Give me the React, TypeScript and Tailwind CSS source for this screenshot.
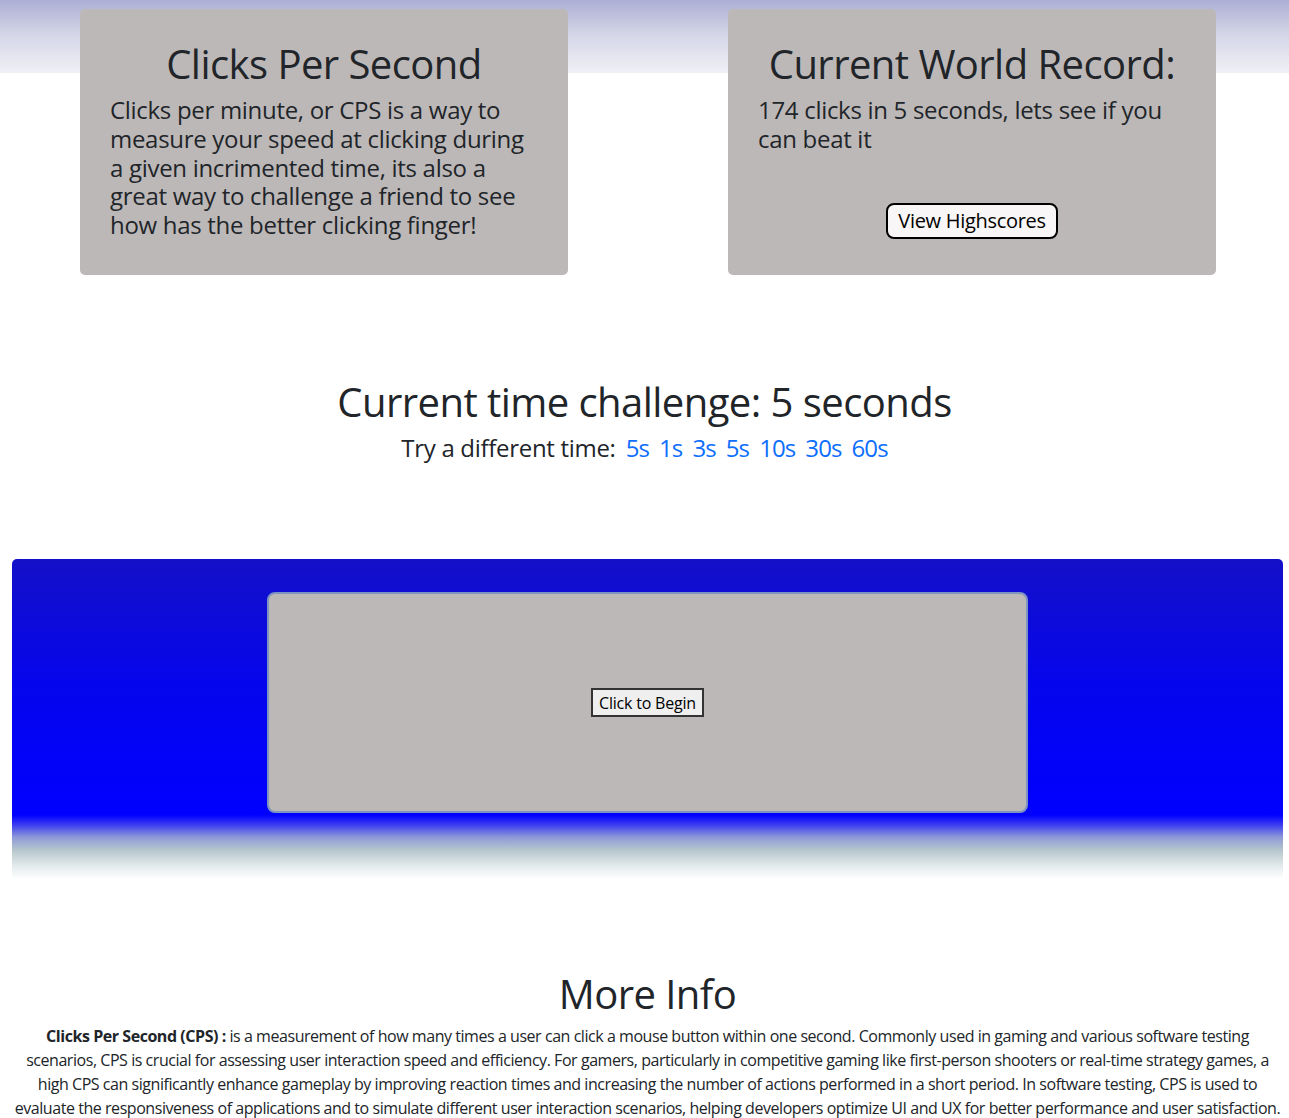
const times = ['5s', '1s', '3s', '5s', '10s', '30s', '60s'];

function InfoCard({ title, children }: { title: string; children: React.ReactNode }) {
  return (
    <div className="w-[488px] h-[266px] bg-[#bdb8b8] rounded-[5px] px-[30px] pt-[31px]">
      <h1 className="text-[40px] leading-[48px] font-medium tracking-[-0.55px] text-center mb-[8px] whitespace-nowrap">{title}</h1>
      {children}
    </div>
  );
}

export default function App() {
  return (
    <div className="w-[1289px] min-h-[1118px] bg-white text-[#212529] font-['Open_Sans',sans-serif]">
      {/* header strip + cards */}
      <div className="bg-[linear-gradient(180deg,#acafd4_0px,#d6d7e8_36px,#f0f0f5_73px,#ffffff_73px)] pt-[9px]">
        <div className="flex gap-[160px] pl-[80px]">
          <InfoCard title="Clicks Per Second">
            <p className="text-[24px] leading-[28.8px] font-medium tracking-[-0.3px]">
              Clicks per minute, or CPS is a way to measure your speed at clicking during a given incrimented time, its also a great way to challenge a friend to see how has the better clicking finger!
            </p>
          </InfoCard>
          <InfoCard title="Current World Record:">
            <p className="text-[24px] leading-[28.8px] font-medium tracking-[-0.3px]">
              174 clicks in 5 seconds, lets see if you can beat it
            </p>
            <div className="flex justify-center mt-[49px]">
              <button className="h-[36px] px-[10px] bg-[#f8f6f6] border-2 border-black rounded-[8px] text-[20px] leading-[24px] tracking-[-0.3px] text-black">
                View Highscores
              </button>
            </div>
          </InfoCard>
        </div>
      </div>

      {/* time challenge */}
      <div className="flex flex-col items-center mt-[103px]">
        <h2 className="text-[40px] leading-[48px] font-medium tracking-[-0.55px]">Current time challenge: 5 seconds</h2>
        <div className="flex items-center gap-[10px] text-[24px] leading-[29px] font-medium tracking-[-0.3px] mt-[7px]">
          <span>Try a different time:</span>
          {times.map((t, i) => (
            <a key={i} href="#" className="text-[#0d6efd] tracking-[-0.9px]">
              {t}
            </a>
          ))}
        </div>
      </div>

      {/* click area */}
      <div className="mt-[97px] mx-[12px] w-[1271px] h-[320px] rounded-t-[5px] bg-[linear-gradient(180deg,#1410c8_0%,#0505ee_40%,#0000ff_80%,#3a3af0_83%,#8f9ad8_87%,#b6c6cc_91%,#e4ebec_96%,#ffffff_100%)] pt-[33px]">
        <div className="mx-auto w-[761px] h-[221px] bg-[#bdb8b8] border-2 border-[#7d93c0] rounded-[8px] flex items-center justify-center">
          <button className="h-[29px] px-[6px] bg-[#efefef] border-2 border-[#333] text-[16px] leading-[20px] tracking-[-0.2px] text-black">
            Click to Begin
          </button>
        </div>
      </div>

      {/* more info */}
      <div className="mx-[12px] w-[1271px] mt-[91px] text-center">
        <h2 className="text-[40px] leading-[48px] font-medium tracking-[-0.55px]">More Info</h2>
        <p className="text-[16px] leading-[24px] font-normal tracking-[-0.45px] mt-[6px]">
          <b className="font-bold">Clicks Per Second (CPS) :</b> is a measurement of how many times a user can click a mouse button within one second. Commonly used in gaming and various software testing scenarios, CPS is crucial for assessing user interaction speed and efficiency. For gamers, particularly in competitive gaming like first-person shooters or real-time strategy games, a high CPS can significantly enhance gameplay by improving reaction times and increasing the number of actions performed in a short period. In software testing, CPS is used to evaluate the responsiveness of applications and to simulate different user interaction scenarios, helping developers optimize UI and UX for better performance and user satisfaction.
        </p>
      </div>
    </div>
  );
}
